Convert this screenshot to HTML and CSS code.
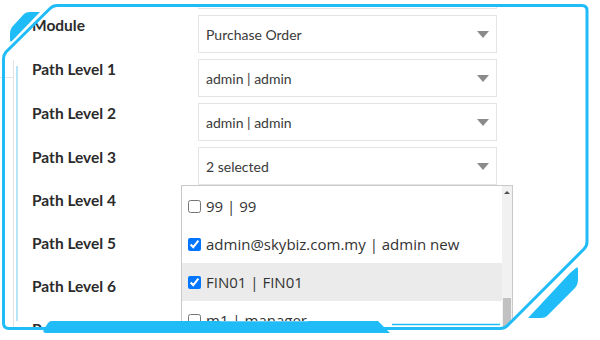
FILE: index.html
```html
<!DOCTYPE html>
<html lang="en">
  <head>
    <meta charset="UTF-8" />
    <meta name="viewport" content="width=device-width, initial-scale=1.0" />
    <title>Path Levels</title>
    <link rel="stylesheet" href="styles.css">
  </head>
  <body>
    <div class="page">
      <div class="panel">
        <div class="form">
          <div class="row">
            <span class="label"></span>
            <div class="select"><span></span><i class="caret"></i></div>
          </div>
          <div class="row">
            <span class="label">Module</span>
            <div class="select"><span>Purchase Order</span><i class="caret"></i></div>
          </div>
          <div class="row">
            <span class="label">Path Level 1</span>
            <div class="select"><span>admin | admin</span><i class="caret"></i></div>
          </div>
          <div class="row">
            <span class="label">Path Level 2</span>
            <div class="select"><span>admin | admin</span><i class="caret"></i></div>
          </div>
          <div class="row row-tight">
            <span class="label">Path Level 3</span>
            <div class="select"><span>2 selected</span><i class="caret"></i></div>
          </div>
          <div class="row row-tight">
            <span class="label">Path Level 4</span>
            <div class="select"><span></span><i class="caret"></i></div>
          </div>
          <div class="row row-tight">
            <span class="label">Path Level 5</span>
            <div class="select"><span></span><i class="caret"></i></div>
          </div>
          <div class="row row-tight">
            <span class="label">Path Level 6</span>
            <div class="select"><span></span><i class="caret"></i></div>
          </div>
          <div class="row row-tight">
            <span class="label">Path Level 7</span>
            <div class="select"><span></span><i class="caret"></i></div>
          </div>
        </div>
      </div>

      <div class="dropdown">
        <ul class="options">
          <li><input type="checkbox" />99 | 99</li>
          <li><input type="checkbox" checked />admin@skybiz.com.my | admin new</li>
          <li class="hover"><input type="checkbox" checked />FIN01 | FIN01</li>
          <li><input type="checkbox" />m1 | manager</li>
        </ul>
        <div class="scrollbar">
          <i class="scroll-up"></i>
          <div class="thumb"></div>
        </div>
      </div>

      <!-- decorative frame laid over the screenshot -->
      <svg class="frame" width="600" height="340" viewBox="0 0 600 340">
        <path fill="white" fill-rule="evenodd"
          d="M0 0 H600 V340 H0 Z M57 5.5 L582 5.5 Q587 5.5 587 10.5 L587 242 Q587 246 584 249 L509 324 Q505 328.5 500 328.5 L9 328.5 Q3.5 328.5 3.5 323 L3.5 59 Q3.5 55 6 52 L50 8.5 Q53 5.5 57 5.5 Z" />
        <line x1="13.5" y1="60" x2="13.5" y2="330" stroke="#e2e2e2" stroke-width="1" />
        <line x1="0" y1="77.5" x2="13" y2="77.5" stroke="#e6e6e6" stroke-width="1" />
        <line x1="17" y1="66" x2="17" y2="321" stroke="#9fdcf6" stroke-width="1.5" />
        <path d="M57 5.5 L582 5.5 Q587 5.5 587 10.5 L587 242 Q587 246 584 249 L509 324 Q505 328.5 500 328.5 L9 328.5 Q3.5 328.5 3.5 323 L3.5 59 Q3.5 55 6 52 L50 8.5 Q53 5.5 57 5.5 Z"
          fill="none" stroke="#20bcf8" stroke-width="3" />
        <path d="M40 12 L30 12 Q26 12 24 14 L12 27 Q10 30 10 33 L10 40 Q10 43 12 41 Z" fill="#20bcf8" />
        <path d="M570 273 L576 268 Q578 266 578 270 L578 280 Q578 285 574 289 L547 316 Q545 318 541 318 L528 318 Z" fill="#20bcf8" />
        <path d="M52 321 L378 321 L390 333 L46 333 Q42 333 44 329 L48 323 Q49 321 52 321 Z" fill="#20bcf8" />
        <line x1="220" y1="321.5" x2="308" y2="321.5" stroke="#5fcdf7" stroke-width="1" />
        <line x1="392" y1="324.5" x2="500" y2="324.5" stroke="#20bcf8" stroke-width="1.5" />
      </svg>
    </div>
  </body>
</html>
```

FILE: styles.css
```css
body {
  margin: 0;
  background-color: white;
  font-family: Lato, "Open Sans", sans-serif;
  color: #333;
}

.page {
  position: relative;
  width: 600px;
  height: 340px;
  overflow: hidden;
}

.panel {
  margin-left: 14px;
  padding-left: 18px;
}

.form {
  margin-top: -29px;
}

.row {
  display: flex;
  height: 44px;
}

.row-tight {
  height: 43px;
}

.label {
  width: 166px;
  flex-shrink: 0;
  line-height: 21px;
  font-size: 15.5px;
  font-weight: bold;
  color: #2b2b2b;
}

.select {
  width: 299px;
  height: 38px;
  box-sizing: border-box;
  border: 1px solid #e4e4e4;
  padding: 0 7px;
  display: flex;
  align-items: center;
  justify-content: space-between;
  font-size: 14px;
  color: #3a3a3a;
}

.caret {
  width: 0;
  height: 0;
  border-left: 6.5px solid transparent;
  border-right: 6.5px solid transparent;
  border-top: 7px solid #8a8a8a;
}

.dropdown {
  position: absolute;
  left: 181px;
  top: 185px;
  width: 332px;
  height: 160px;
  box-sizing: border-box;
  border: 1px solid #c9c9c9;
  background-color: white;
  display: flex;
}

.options {
  list-style: none;
  margin: 0;
  padding: 1px 0 0;
  flex: 1;
  font-family: "Open Sans", sans-serif;
  font-size: 15px;
  color: #333;
}

.options li {
  height: 38px;
  display: flex;
  align-items: center;
}

.options li.hover {
  background-color: #ebebeb;
}

.options input {
  width: 13px;
  height: 13px;
  margin: 0 5px 0 6px;
}

.scrollbar {
  width: 10px;
  background-color: #f1f1f1;
  position: relative;
}

.scroll-up {
  position: absolute;
  left: 2px;
  top: 5px;
  width: 0;
  height: 0;
  border-left: 3px solid transparent;
  border-right: 3px solid transparent;
  border-bottom: 3px solid #505050;
}

.thumb {
  position: absolute;
  left: 1px;
  top: 112px;
  width: 8px;
  height: 40px;
  background-color: #c1c1c1;
}

.frame {
  position: absolute;
  left: 0;
  top: 0;
  pointer-events: none;
}
```
